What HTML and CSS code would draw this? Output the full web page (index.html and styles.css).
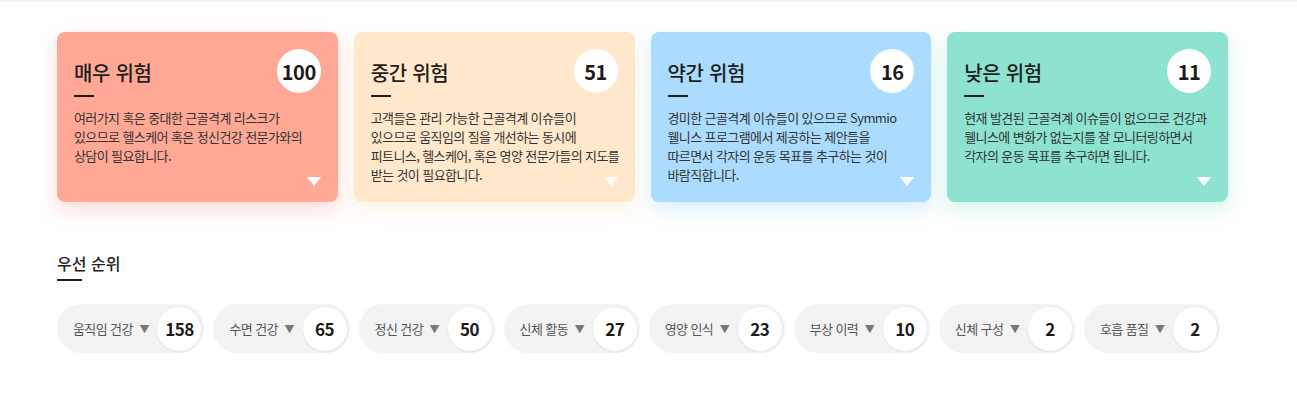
FILE: index.html
```html
<!DOCTYPE html>
<html lang="ko">
<head>
<meta charset="utf-8">
<link rel="stylesheet" href="styles.css">
</head>
<body>
<div class="topline"></div>
<main class="page">
  <section class="cards">
    <div class="card card-high">
      <div class="card-head">
        <h2 class="card-title">매우 위험</h2>
        <span class="badge">100</span>
      </div>
      <div class="rule"></div>
      <p class="card-desc">여러가지 혹은 중대한 근골격계 리스크가 있으므로 헬스케어 혹은 정신건강 전문가와의 상담이 필요합니다.</p>
      <span class="tri"></span>
    </div>
    <div class="card card-mid">
      <div class="card-head">
        <h2 class="card-title">중간 위험</h2>
        <span class="badge">51</span>
      </div>
      <div class="rule"></div>
      <p class="card-desc">고객들은 관리 가능한 근골격계 이슈들이 있으므로 움직임의 질을 개선하는 동시에 피트니스, 헬스케어, 혹은 영양 전문가들의 지도를 받는 것이 필요합니다.</p>
      <span class="tri"></span>
    </div>
    <div class="card card-slight">
      <div class="card-head">
        <h2 class="card-title">약간 위험</h2>
        <span class="badge">16</span>
      </div>
      <div class="rule"></div>
      <p class="card-desc">경미한 근골격계 이슈들이 있으므로 Symmio 웰니스 프로그램에서 제공하는 제안들을 따르면서 각자의 운동 목표를 추구하는 것이 바람직합니다.</p>
      <span class="tri"></span>
    </div>
    <div class="card card-low">
      <div class="card-head">
        <h2 class="card-title">낮은 위험</h2>
        <span class="badge">11</span>
      </div>
      <div class="rule"></div>
      <p class="card-desc">현재 발견된 근골격계 이슈들이 없으므로 건강과 웰니스에 변화가 없는지를 잘 모니터링하면서 각자의 운동 목표를 추구하면 됩니다.</p>
      <span class="tri"></span>
    </div>
  </section>

  <section class="priority">
    <h3 class="section-title">우선 순위</h3>
    <div class="rule rule-section"></div>
    <div class="chips">
      <div class="chip"><span class="chip-label">움직임 건강</span><span class="chip-arrow">▼</span><span class="chip-num">158</span></div>
      <div class="chip"><span class="chip-label">수면 건강</span><span class="chip-arrow">▼</span><span class="chip-num">65</span></div>
      <div class="chip"><span class="chip-label">정신 건강</span><span class="chip-arrow">▼</span><span class="chip-num">50</span></div>
      <div class="chip"><span class="chip-label">신체 활동</span><span class="chip-arrow">▼</span><span class="chip-num">27</span></div>
      <div class="chip"><span class="chip-label">영양 인식</span><span class="chip-arrow">▼</span><span class="chip-num">23</span></div>
      <div class="chip"><span class="chip-label">부상 이력</span><span class="chip-arrow">▼</span><span class="chip-num">10</span></div>
      <div class="chip"><span class="chip-label">신체 구성</span><span class="chip-arrow">▼</span><span class="chip-num">2</span></div>
      <div class="chip"><span class="chip-label">호흡 품질</span><span class="chip-arrow">▼</span><span class="chip-num">2</span></div>
    </div>
  </section>
</main>
</body>
</html>
```

FILE: styles.css
```css
* { box-sizing: border-box; }
html, body {
  margin: 0;
  padding: 0;
  background: #ffffff;
  font-family: "Noto Sans CJK KR", "Noto Sans", sans-serif;
  color: #222;
}
.topline {
  height: 2px;
  background: #f3f3f3;
}
.page {
  padding: 30px 0 0 57px;
}
.cards {
  display: grid;
  grid-template-columns: repeat(4, 280.75px);
  gap: 16px;
}
.card {
  position: relative;
  height: 170px;
  border-radius: 8px;
  padding: 17px 14.5px 0 17px;
}
.card-high { background: #ffa896; box-shadow: 0 8px 20px rgba(255, 150, 140, 0.35); }
.card-mid { background: #ffe8cc; box-shadow: 0 8px 20px rgba(255, 220, 180, 0.35); }
.card-slight { background: #abdcfd; box-shadow: 0 8px 20px rgba(150, 210, 250, 0.35); }
.card-low { background: #8de3cf; box-shadow: 0 8px 20px rgba(130, 225, 200, 0.35); }
.card-head {
  display: flex;
  justify-content: space-between;
  align-items: center;
  height: 44px;
  margin-right: 2.5px;
}
.card-title {
  margin: 0;
  font-size: 20px;
  font-weight: 500;
  color: #1e1e1e;
  letter-spacing: -0.3px;
  padding-top: 3px;
}
.badge {
  width: 44px;
  height: 44px;
  border-radius: 50%;
  background: #fff;
  display: flex;
  align-items: center;
  justify-content: center;
  font-weight: 700;
  font-size: 20px;
  color: #1a1a1a;
  letter-spacing: -0.5px;
}
.rule {
  width: 20px;
  height: 2px;
  background: #1e1e1e;
  margin-top: 2px;
}
.card-desc {
  margin: 11px 0 0 0;
  font-size: 13px;
  line-height: 19px;
  color: #333;
  letter-spacing: -0.6px;
  word-break: keep-all;
}
.tri {
  position: absolute;
  right: 17px;
  bottom: 16px;
  width: 0;
  height: 0;
  border-left: 7px solid transparent;
  border-right: 7px solid transparent;
  border-top: 9px solid #fff;
}
.priority {
  margin-top: 49px;
}
.section-title {
  margin: 0;
  font-size: 16px;
  font-weight: 500;
  color: #222;
  line-height: 24px;
}
.rule-section {
  width: 25px;
  margin-top: 4px;
}
.chips {
  display: flex;
  gap: 9px;
  margin-top: 23px;
}
.chip {
  display: flex;
  align-items: center;
  height: 49px;
  border-radius: 25px;
  background: #f3f3f3;
  padding: 0 3px 0 16px;
}
.chip-label {
  font-size: 13px;
  color: #555;
  letter-spacing: -0.6px;
}
.chip-arrow {
  font-size: 10px;
  color: #777;
  margin: 0 8px 0 6.6px;
}
.chip-num {
  width: 44px;
  height: 44px;
  border-radius: 50%;
  background: #fff;
  box-shadow: 0 1px 3px rgba(0, 0, 0, 0.08);
  display: flex;
  align-items: center;
  justify-content: center;
  font-weight: 700;
  font-size: 17px;
  color: #1a1a1a;
  letter-spacing: -0.5px;
}
```
